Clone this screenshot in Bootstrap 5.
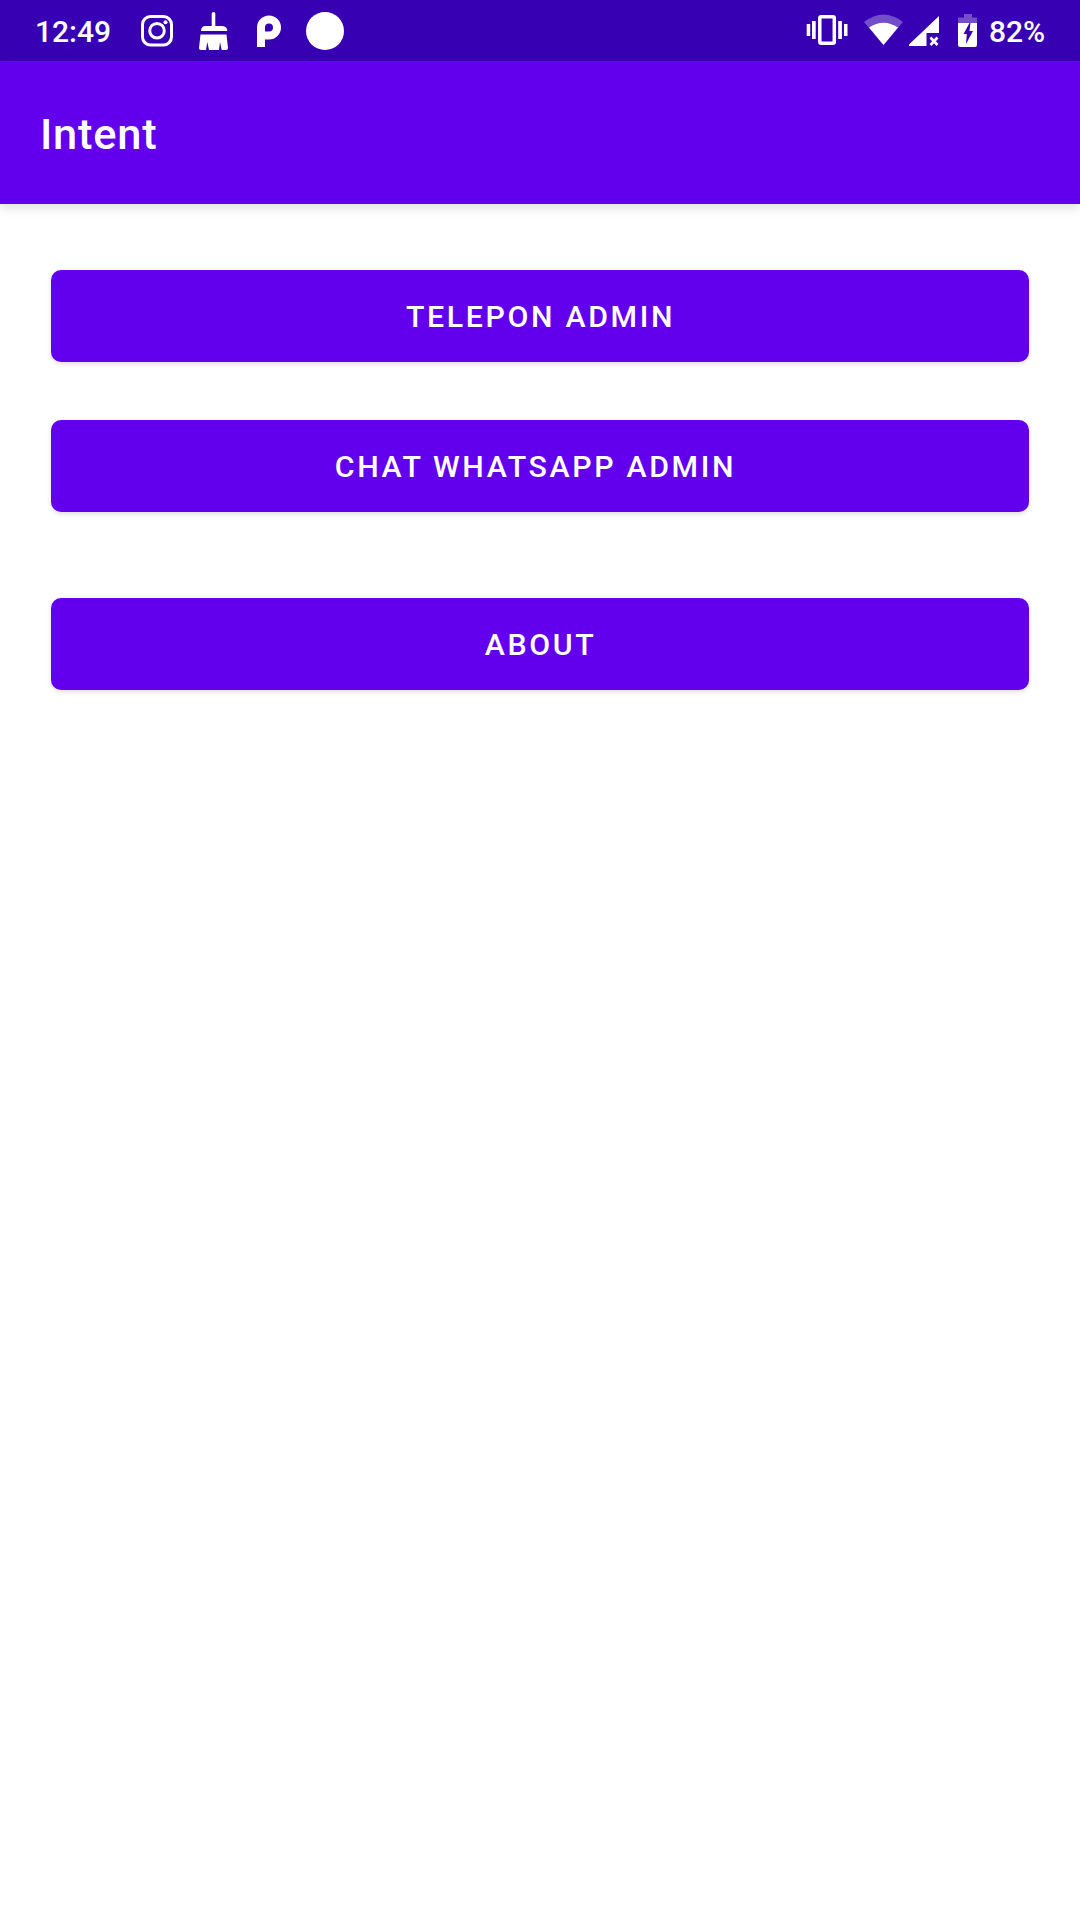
<!DOCTYPE html>
<html lang="id">
<head>
<meta charset="utf-8">
<meta name="viewport" content="width=device-width, initial-scale=1">
<title>Intent</title>
<link rel="stylesheet" href="https://cdn.jsdelivr.net/npm/bootstrap@5.3.0/dist/css/bootstrap.min.css">
<style>
body { font-family: Roboto, sans-serif; min-height: 1920px; color: #fff; }
.status-bar { height: 61px; background: #3700b3; padding: 0 35px 0 35px; font-size: 30px; font-weight: 500; line-height: 63px; }
.status-bar svg { height: 61px; flex: none; fill: #fff; }
.clock { width: 104px; }
.percent { margin-left: 11px; width: 56px; white-space: nowrap; }
.app-bar { height: 143px; background: #6200ee; padding: 4px 40px 0; box-shadow: 0 4px 10px rgba(0,0,0,.13); }
.app-title { font-size: 43.4px; font-weight: 500; letter-spacing: .8px; line-height: 1; }
.actions { padding: 66px 51px 0; }
.btn-action { --bs-btn-color: #fff; --bs-btn-bg: #6200ee; --bs-btn-hover-color: #fff; --bs-btn-hover-bg: #5300ca;
  height: 92px; padding: 1px 0 0 1px; border: 0; border-radius: 10px; font-size: 30.3px; font-weight: 500; letter-spacing: 2.65px; line-height: 92px; box-shadow: 0 2px 5px rgba(0,0,0,.13); white-space: pre; }
.gap-chat { margin-top: 58px; }
.gap-about { margin-top: 86px; }
</style>
<script src="https://cdn.jsdelivr.net/npm/bootstrap@5.3.0/dist/js/bootstrap.bundle.min.js"></script>
</head>
<body class="bg-white">
<header>
  <div class="status-bar d-flex justify-content-between">
    <div class="d-flex">
      <span class="clock">12:49</span>
      <!-- camera -->
      <svg width="60" viewBox="139 0 60 61"><g fill="none" stroke="#fff" stroke-width="3"><rect x="142.5" y="16.500" width="29" height="28.500" rx="8"/><circle cx="157" cy="30.700" r="7.300"/></g><circle cx="165.500" cy="22.300" r="2"/></svg>
      <!-- broom -->
      <svg width="58" viewBox="199 0 58 61"><path d="M211.700 13.500q0-1.500 1.800-1.500t1.800 1.500V26h6q6 0 6 5H201q0-5 5-5h5.700zM200.500 34.500h26L228 48q0 2-2 2h-4.300l-1.700-8-1 8h-10l-1.700-8-1.300 8h-5q-2 0-2-2z"/></svg>
      <!-- letter-shaped badge -->
      <svg width="49" viewBox="257 0 49 61"><path fill-rule="evenodd" d="M257 47V27.500a12 12 0 1 1 12 12h-4V47zM265 31.500h4a4 4 0 1 0-4-4z"/></svg>
      <svg width="38" viewBox="306 0 38 61"><circle cx="325" cy="31" r="19"/></svg>
    </div>
    <div class="d-flex">
      <!-- vibrate -->
      <svg width="58" viewBox="806 0 58 61"><path d="M806.700 24h3.500v12h-3.500zM812 21h3.700v18H812zM838.200 21h3.700v18h-3.700zM844 24h3.500v12H844z"/><rect x="820" y="16.700" width="14.500" height="26.500" rx="1.500" fill="none" stroke="#fff" stroke-width="3.500" transform="translate(-.2 0)"/></svg>
      <!-- wifi -->
      <svg width="45" viewBox="864 0 45 61"><path opacity=".3" d="M864 22Q883.500 7 903 22L883.500 45z"/><path d="M869 27.500Q883.500 18 898 27.500L883.500 45z"/></svg>
      <!-- mobile signal -->
      <svg width="49" viewBox="909 0 49 61"><path d="M939 16v17h-12.500v13H909v-1.500z"/><path d="m930.500 37.500 7 7.500m0-7.500-7 7.500" fill="none" stroke="#fff" stroke-width="2.600"/></svg>
      <!-- battery -->
      <svg width="20" viewBox="958 0 20 61"><path opacity=".3" d="M964 14h8v3.500h5V23h-19v-5.500h6z"/><path fill-rule="evenodd" d="M958 23h19v22q0 2-2 2h-15q-2 0-2-2zM969.500 23l-6 11h3.300l-.8 10 7-13h-3.500l1-8z"/></svg>
      <span class="percent">82%</span>
    </div>
  </div>
  <nav class="app-bar d-flex align-items-center"><h1 class="app-title m-0">Intent</h1></nav>
</header>
<main class="actions d-flex flex-column">
  <button type="button" class="btn btn-action w-100">TELEPON ADMIN</button>
  <button type="button" class="btn btn-action gap-chat w-100">CHAT WHATSAPP ADMIN </button>
  <button type="button" class="btn btn-action gap-about w-100">ABOUT</button>
</main>
</body>
</html>
